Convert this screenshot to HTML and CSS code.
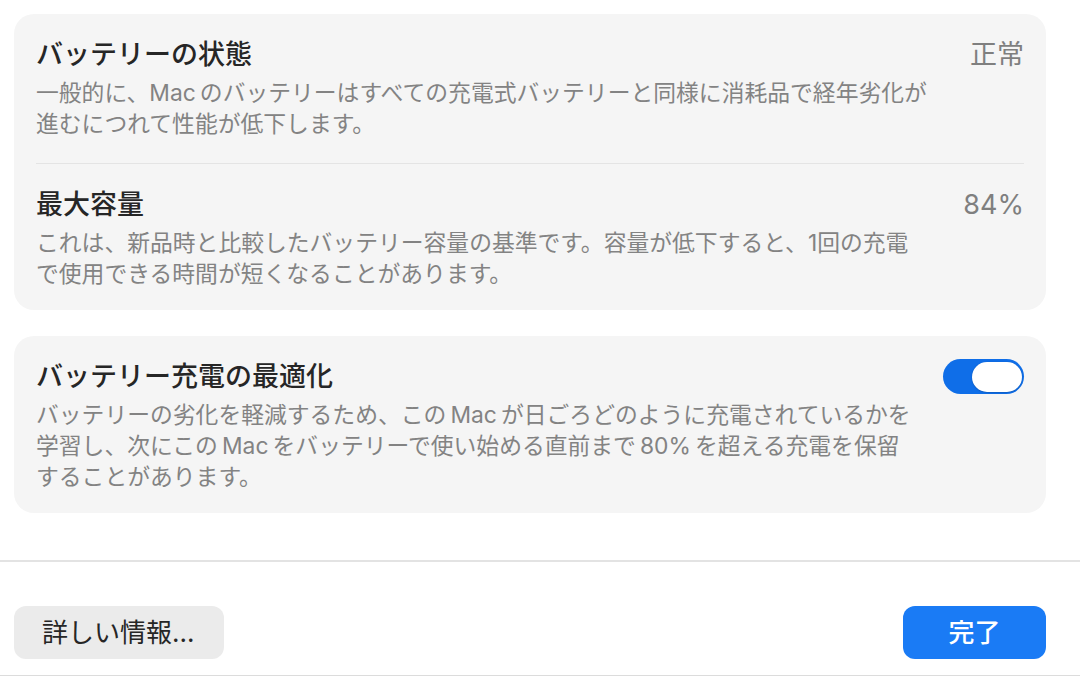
FILE: index.html
```html
<!DOCTYPE html>
<html lang="ja">
<head>
<meta charset="utf-8">
<title>バッテリー</title>
<link rel="stylesheet" href="styles.css">
</head>
<body>
<div class="window">
  <main class="content">
    <section class="card">
      <div class="row">
        <div class="text">
          <div class="title">バッテリーの状態</div>
          <p class="desc">一般的に、<span class="lat lat-tight">Mac</span>のバッテリーはすべての充電式バッテリーと同様に消耗品で経年劣化が<br>進むにつれて性能が低下します。</p>
        </div>
        <div class="value">正常</div>
      </div>
      <div class="sep"></div>
      <div class="row">
        <div class="text">
          <div class="title">最大容量</div>
          <p class="desc">これは、新品時と比較したバッテリー容量の基準です。容量が低下すると、1回の充電<br>で使用できる時間が短くなることがあります。</p>
        </div>
        <div class="value">84%</div>
      </div>
    </section>

    <section class="card">
      <div class="row">
        <div class="text">
          <div class="title">バッテリー充電の最適化</div>
          <p class="desc">バッテリーの劣化を軽減するため、この<span class="lat">Mac</span>が日ごろどのように充電されているかを<br>学習し、次にこの<span class="lat">Mac</span>をバッテリーで使い始める直前まで<span class="lat">80%</span>を超える充電を保留<br>することがあります。</p>
        </div>
        <div class="toggle" role="switch" aria-checked="true"><span class="knob"></span></div>
      </div>
    </section>
  </main>

  <footer class="footer">
    <button class="btn btn-secondary">詳しい情報...</button>
    <button class="btn btn-primary">完了</button>
  </footer>
</div>
</body>
</html>
```

FILE: styles.css
```css
* { box-sizing: border-box; }

html, body {
  margin: 0;
  padding: 0;
  background: #ffffff;
}

body {
  font-family: "Inter", "Noto Sans CJK JP", sans-serif;
  color: #262626;
  width: 1080px;
  height: 676px;
  overflow: hidden;
}

.window {
  height: 676px;
  display: flex;
  flex-direction: column;
  border-bottom: 1px solid #dcdcdc;
}

.content {
  height: 560px;
  padding: 14px 34px 0 14px;
  display: flex;
  flex-direction: column;
  gap: 26px;
}

.card {
  background: #f5f5f5;
  border-radius: 20px;
  padding: 0 22px;
}

.row {
  display: flex;
  align-items: flex-start;
  justify-content: space-between;
  padding: 24px 0 24px;
}

.row:last-child {
  padding-bottom: 21px;
}

.sep {
  height: 1px;
  background: #e4e4e4;
}

.text {
  flex: 1;
  min-width: 0;
}

.title {
  font-size: 27px;
  line-height: 33px;
  font-weight: 500;
  color: #262626;
}

.desc {
  margin: 6px 0 0;
  font-size: 22.8px;
  line-height: 31px;
  color: #838383;
  white-space: nowrap;
}

.lat {
  margin: 0 0.18em;
}

.lat-tight {
  margin-left: 0;
}

.value {
  font-size: 27px;
  line-height: 33px;
  color: #7f7f7f;
  white-space: nowrap;
}

.toggle {
  width: 81px;
  height: 35px;
  margin-top: -1px;
  border-radius: 18px;
  background: #0f6ee8;
  position: relative;
  flex: none;
}

.knob {
  position: absolute;
  right: 2px;
  top: 2.5px;
  width: 50px;
  height: 30px;
  border-radius: 15px;
  background: #ffffff;
  box-shadow: 0 0.5px 1.5px rgba(0,0,0,0.25);
}

.footer {
  flex: 1;
  border-top: 2px solid #e3e3e3;
  padding: 44px 34px 0 14px;
  display: flex;
  justify-content: space-between;
  align-items: flex-start;
}

.btn {
  font-family: "Inter", "Noto Sans CJK JP", sans-serif;
  font-size: 26px;
  height: 53px;
  border: none;
  border-radius: 12px;
  padding: 0 28px;
  line-height: 53px;
}

.btn-secondary {
  background: #ebebeb;
  color: #262626;
  padding: 0 30px 0 28px;
}

.btn-primary {
  background: #1a7bf5;
  color: #ffffff;
  width: 143px;
  font-weight: 500;
}
```
